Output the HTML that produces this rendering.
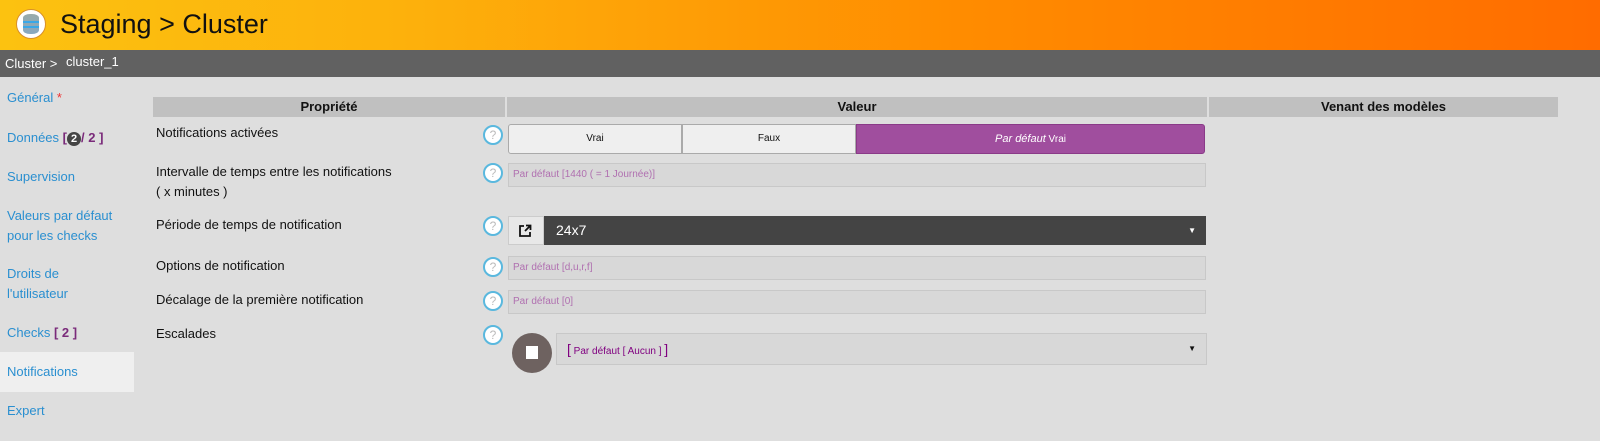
<!DOCTYPE html>
<html><head><meta charset="utf-8"><style>
*{margin:0;padding:0;box-sizing:border-box}
body{width:1600px;height:441px;overflow:hidden;background:#dedede;font-family:"Liberation Sans",sans-serif;position:relative;color:#111}
.a{position:absolute}
.hdr{left:0;top:0;width:1600px;height:50px;background:linear-gradient(90deg,#fcc210 0%,#fdb10c 25%,#ff8c00 60%,#ff6c00 100%)}
.bc{left:0;top:50px;width:1600px;height:27px;background:#616161;color:#fff;font-size:13px}
.nav{font-size:13px;color:#2a8fd0;left:7px;line-height:20px}
.lbl{font-size:13px;left:156px;line-height:20px}
.q{width:20px;height:20px;border:2px solid #5ab8de;border-radius:50%;background:#fff;color:#bbb;font-size:12px;text-align:center;line-height:16px;left:483px}
.th{top:97px;height:20px;background:#c0c0c0;font-weight:bold;font-size:13px;text-align:center;line-height:20px}
.inp{left:508px;width:698px;height:24px;background:#d8d8d8;border:1px solid #c8c8c8;color:#b070b0;font-size:10px;line-height:22px;padding-left:4px}
.btn{top:124px;height:30px;background:#efefef;border:1px solid #aaa;font-size:10px;text-align:center;line-height:28px}
</style></head><body>
<div class="a hdr"></div>
<div class="a" style="left:16px;top:9px;width:30px;height:30px;border-radius:50%;background:#fff;border:1px solid #d8902a"></div>
<div class="a" style="left:23px;top:14px;width:16px;height:20px;border-radius:7px/4px;background:linear-gradient(#9aa 0,#88a8c0 100%)"></div>
<div class="a" style="left:23px;top:21px;width:16px;height:2px;background:#3aa8e8"></div>
<div class="a" style="left:23px;top:26px;width:16px;height:2px;background:#3aa8e8"></div>
<div class="a" style="left:60px;top:9px;font-size:27px;color:#111">Staging &gt; Cluster</div>
<div class="a bc"><span class="a" style="left:5px;top:6px">Cluster &gt;</span><span class="a" style="left:66px;top:4px">cluster_1</span></div>
<div class="a" style="left:0;top:352px;width:134px;height:40px;background:#efefef"></div>
<div class="a nav" style="top:88px">Général <span style="color:#e33">*</span></div>
<div class="a nav" style="top:128px">Données <b style="color:#7a2a7a">[<span style="display:inline-block;width:14px;height:14px;border-radius:50%;background:#444;color:#fff;font-size:11px;text-align:center;line-height:14px">2</span>/ 2 ]</b></div>
<div class="a nav" style="top:167px">Supervision</div>
<div class="a nav" style="top:206px">Valeurs par défaut<br>pour les checks</div>
<div class="a nav" style="top:264px">Droits de<br>l'utilisateur</div>
<div class="a nav" style="top:323px">Checks <b style="color:#7a2a7a">[ 2 ]</b></div>
<div class="a nav" style="top:362px">Notifications</div>
<div class="a nav" style="top:401px">Expert</div>
<div class="a th" style="left:153px;width:352px">Propriété</div>
<div class="a th" style="left:507px;width:700px">Valeur</div>
<div class="a th" style="left:1209px;width:349px">Venant des modèles</div>
<div class="a lbl" style="top:123px">Notifications activées</div>
<div class="a lbl" style="top:162px">Intervalle de temps entre les notifications<br>( x minutes )</div>
<div class="a lbl" style="top:215px">Période de temps de notification</div>
<div class="a lbl" style="top:256px">Options de notification</div>
<div class="a lbl" style="top:290px">Décalage de la première notification</div>
<div class="a lbl" style="top:324px">Escalades</div>
<div class="a q" style="top:125px">?</div>
<div class="a q" style="top:163px">?</div>
<div class="a q" style="top:216px">?</div>
<div class="a q" style="top:257px">?</div>
<div class="a q" style="top:291px">?</div>
<div class="a q" style="top:325px">?</div>
<div class="a btn" style="left:508px;width:174px;border-radius:3px 0 0 3px">Vrai</div>
<div class="a btn" style="left:682px;width:174px">Faux</div>
<div class="a btn" style="left:856px;width:349px;background:#a04e9e;border-color:#8a3a88;color:#fff;border-radius:0 3px 3px 0"><i style="font-size:11px">Par défaut</i> Vrai</div>
<div class="a inp" style="top:163px">Par défaut [1440 ( = 1 Journée)]</div>
<div class="a" style="left:508px;top:216px;width:36px;height:29px;background:#e8e8e8;border:1px solid #ccc"></div>
<svg class="a" style="left:518px;top:224px" width="14" height="14" viewBox="0 0 14 14"><path d="M6 2H2v10h10V8" fill="none" stroke="#111" stroke-width="1.8"/><path d="M7 7L12 2M8 1.5h4.5V6" fill="none" stroke="#111" stroke-width="1.8"/></svg>
<div class="a" style="left:544px;top:216px;width:662px;height:29px;background:#444;color:#fff;font-size:14px;line-height:29px;padding-left:12px">24x7<span class="a" style="right:10px;top:0;font-size:8px">▼</span></div>
<div class="a inp" style="top:256px">Par défaut [d,u,r,f]</div>
<div class="a inp" style="top:290px">Par défaut [0]</div>
<div class="a" style="left:512px;top:333px;width:40px;height:40px;border-radius:50%;background:#6e6260"></div>
<div class="a" style="left:526px;top:346px;width:12px;height:13px;background:#fff"></div>
<div class="a" style="left:556px;top:333px;width:651px;height:32px;background:#d8d8d8;border:1px solid #c8c8c8;color:#800080;font-size:10px;line-height:30px;padding-left:10px"><span style="font-size:14px">[</span> Par défaut [ Aucun ] <span style="font-size:14px">]</span><span class="a" style="right:10px;top:0;font-size:8px;color:#111">▼</span></div>
</body></html>
